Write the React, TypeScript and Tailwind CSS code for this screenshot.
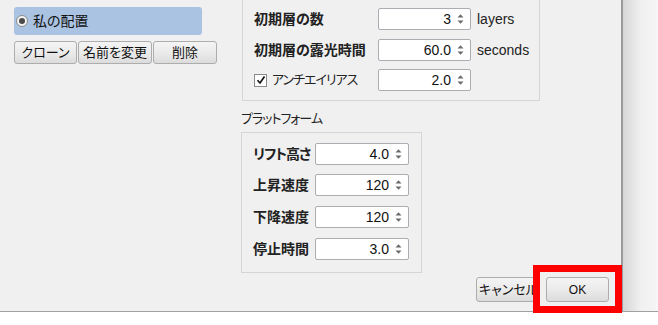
import React from "react";

const Arrows = () => (
  <svg width="7" height="12" viewBox="0 0 7 12" className="ml-[6px] shrink-0">
    <polygon points="0.5,4.5 3.5,1.2 6.5,4.5" fill="#6b6b6b" />
    <polygon points="0.5,7.5 3.5,10.8 6.5,7.5" fill="#6b6b6b" />
  </svg>
);

const Spin = ({ value, w }: { value: string; w: string }) => (
  <div className={`${w} h-[22px] bg-white border border-[#abadb3] rounded-[2px] flex items-center justify-end pr-[6px] shrink-0`}>
    <span className="text-[14px] leading-none text-[#111]">{value}</span>
    <Arrows />
  </div>
);

const Btn = ({ children, w, cls = "" }: { children: React.ReactNode; w: string; cls?: string }) => (
  <div
    className={`${w} h-[23px] border border-[#adadad] rounded-[3px] bg-gradient-to-b from-[#f4f4f4] via-[#ebebeb] to-[#dcdcdc] flex items-center justify-center text-[13px] text-[#111] overflow-hidden whitespace-nowrap ${cls}`}
  >
    {children}
  </div>
);

export default function App() {
  return (
    <div
      className="w-[658px] h-[325px] relative overflow-hidden bg-white [font-feature-settings:'palt']"
      style={{ fontFamily: "'Liberation Sans', 'Noto Sans CJK JP', sans-serif" }}
    >
      <div className="flex h-[311px]">
        <div className="w-[621px] bg-[#f0f0f0] flex flex-col">
          <div className="flex">
            {/* left panel */}
            <div className="w-[241px] shrink-0 pl-[14px] pt-[7px]">
              <div className="w-[188px] h-[28px] rounded-[3px] bg-[#aac3e2] flex items-center pl-[2px]">
                <div className="w-[12px] h-[12px] rounded-full border border-[#8c8c8c] bg-[#f4f4f4] flex items-center justify-center">
                  <div className="w-[6px] h-[6px] rounded-full bg-[#4a4a4a]" />
                </div>
                <span className="ml-[5px] text-[14px] text-[#111]">私の配置</span>
              </div>
              <div className="flex gap-[1px] mt-[6px]">
                <Btn w="w-[63px]">クローン</Btn>
                <Btn w="w-[74px]">名前を変更</Btn>
                <Btn w="w-[64px]">削除</Btn>
              </div>
            </div>
            {/* middle */}
            <div className="flex flex-col">
              <div className="w-[298px] h-[101px] ml-[1px] border border-t-0 border-[#d5d5d5] flex flex-col gap-[8px] pt-[8px] pl-[11px]">
                <div className="flex items-center h-[22px]">
                  <span className="w-[124px] shrink-0 whitespace-nowrap text-[14px] font-bold text-[#222]">初期層の数</span>
                  <Spin value="3" w="w-[93px]" />
                  <span className="ml-[6px] text-[14px] text-[#222]">layers</span>
                </div>
                <div className="flex items-center h-[22px] mt-[1px]">
                  <span className="w-[124px] shrink-0 whitespace-nowrap text-[14px] font-bold text-[#222]">初期層の露光時間</span>
                  <Spin value="60.0" w="w-[93px]" />
                  <span className="ml-[6px] text-[14px] text-[#222]">seconds</span>
                </div>
                <div className="flex items-center h-[22px]">
                  <div className="w-[124px] shrink-0 flex items-center">
                    <div className="w-[13px] h-[13px] border border-[#8a8a8a] bg-white flex items-center justify-center">
                      <svg width="10" height="10" viewBox="0 0 10 10">
                        <path d="M1.5 5.2 L4 8 L8.5 1.5" fill="none" stroke="#111" strokeWidth="1.7" />
                      </svg>
                    </div>
                    <span className="ml-[5px] whitespace-nowrap text-[13px] tracking-[-1px] text-[#222]">アンチエイリアス</span>
                  </div>
                  <Spin value="2.0" w="w-[93px]" />
                </div>
              </div>
              <div className="h-[31px] pt-[9px] text-[13px] tracking-[-1px] leading-[18px] text-[#222] whitespace-nowrap">プラットフォーム</div>
              <div className="w-[181px] h-[141px] border border-[#d5d5d5] flex flex-col pt-[10px] pl-[11px]">
                {[
                  ["リフト高さ", "4.0", "mt-0", "tracking-[-1px]"],
                  ["上昇速度", "120", "mt-[9px]", ""],
                  ["下降速度", "120", "mt-[10px]", ""],
                  ["停止時間", "3.0", "mt-[10px]", ""],
                ].map(([l, v, m, t]) => (
                  <div key={l} className={`flex items-center h-[22px] ${m}`}>
                    <span className={`w-[62px] shrink-0 whitespace-nowrap text-[14px] font-bold text-[#222] ${t}`}>{l}</span>
                    <Spin value={v} w="w-[94px]" />
                  </div>
                ))}
              </div>
            </div>
          </div>
          <div className="flex justify-end gap-[6px] pr-[12px] mt-[4px]">
            <Btn w="w-[64px]" cls="h-[25px] !justify-start pl-[2px]">キャンセル</Btn>
            <Btn w="w-[63px]" cls="h-[25px]">
              <span className="text-[12px]">OK</span>
            </Btn>
          </div>
        </div>
        <div className="w-[2px] bg-[#9a9a9a]" />
        <div className="flex-1 bg-gradient-to-r from-[#d6d6d6] via-[#f0f0f0] to-[#f6f6f6]" />
      </div>
      <div className="h-[1px] bg-[#a0a0a0]" />
      <div className="absolute left-[533px] top-[265px] w-[89px] h-[48px] border-[7px] border-[#ff0000]" />
    </div>
  );
}
